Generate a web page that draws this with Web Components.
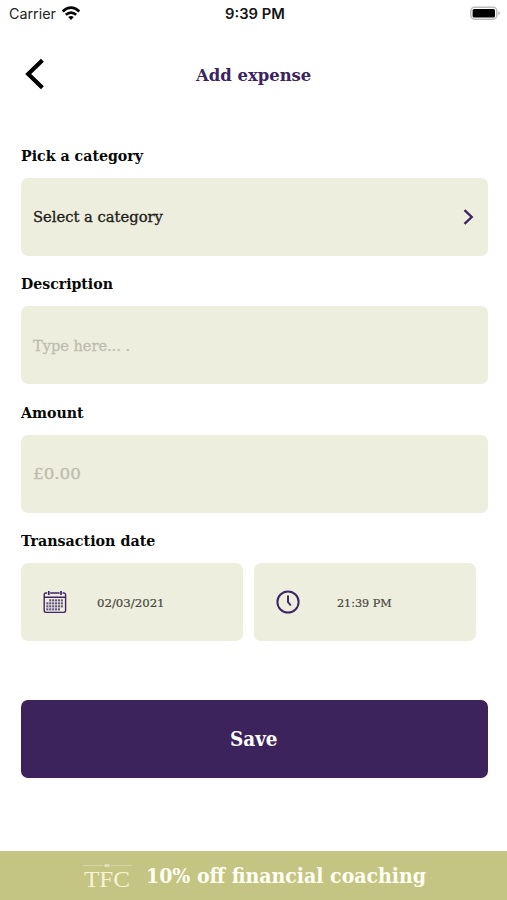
<!DOCTYPE html>
<html lang="en">
<head>
<meta charset="utf-8">
<title>Add expense</title>
<style>
html,body{margin:0;background:#fff}
body{width:507px;height:900px;overflow:hidden}
</style>
</head>
<body>
<expense-page></expense-page>
<script>
// One line of text, drawn at the width given by its attribute.
class FitText extends HTMLElement {
  connectedCallback() {
    const root = this.attachShadow({mode: 'open'});
    root.innerHTML = `<style>
      :host{display:block;flex:none;white-space:pre;width:${this.getAttribute('width')}px}
      span{display:inline-block;transform-origin:0 50%}
    </style><span></span>`;
    const span = root.querySelector('span');
    span.textContent = this.getAttribute('text');
    const w = span.offsetWidth;
    if (w) span.style.transform = `scaleX(${this.getAttribute('width') / w})`;
  }
}

class StatusBar extends HTMLElement {
  connectedCallback() {
    this.attachShadow({mode: 'open'}).innerHTML = `<style>
      :host{display:grid;grid-template-columns:1fr auto 1fr;align-items:center;height:28px;padding:0 6px 0 9px;font-family:Inter,sans-serif;color:#222;box-sizing:border-box}
      .l{display:flex;align-items:center;gap:5px}
      .carrier{font-size:14px;line-height:28px}
      .time{font-size:14px;font-weight:600;color:#151515;line-height:28px;margin-left:-1px}
      .r{justify-self:end;display:flex;margin-top:-2px}
      .l svg{margin-top:-2px}
      svg{display:block}
    </style>
    <div class="l"><fit-text class="carrier" width="47" text="Carrier"></fit-text>
      <svg width="20" height="15" viewBox="0 0 20 15" fill="none" stroke="#050505" stroke-width="2.7"><path d="M1.7 5.4Q10 -2 18.3 5.4"/><path d="M4.8 8.8Q10 4.3 15.2 8.8"/><path d="M7.2 11.1Q10 8.8 12.8 11.1L10 14Z" fill="#050505" stroke="none"/></svg></div>
    <fit-text class="time" width="60" text="9:39 PM"></fit-text>
    <div class="r"><svg width="32" height="16" viewBox="0 0 32 16"><rect x="1.8" y="2.2" width="26" height="12" rx="3.8" fill="#fff" stroke="#bcbcbc" stroke-width="1.5"/><rect x="3.6" y="4" width="22.4" height="8.5" rx="1.5"/><path d="M29.4 6.2q2.8 2 0 4z" fill="#aaa"/></svg></div>`;
  }
}

class PageHeader extends HTMLElement {
  connectedCallback() {
    this.attachShadow({mode: 'open'}).innerHTML = `<style>
      :host{display:grid;grid-template-columns:1fr auto 1fr;align-items:center;height:92px;padding:0 24px;box-sizing:border-box}
      fit-text{font:bold 17px/24px "DejaVu Serif Condensed","DejaVu Serif",serif;color:#3b2360;padding-top:1px}
      svg{display:block}
    </style>
    <svg width="22" height="34" viewBox="0 0 22 34" fill="none" stroke="#000" stroke-width="4.2"><path d="M18.4 3.2L4.2 17L18.4 30.8"/></svg>
    <fit-text width="115" text="Add expense"></fit-text><span></span>`;
  }
}

class FormField extends HTMLElement {
  connectedCallback() {
    this.attachShadow({mode: 'open'}).innerHTML = `<style>
      :host{display:block;height:128.67px}
      fit-text{font:bold 15.5px/24px "DejaVu Serif Condensed","DejaVu Serif",serif;color:#080808}
      .row{display:flex;gap:11px;margin-top:10px}
    </style>
    <fit-text width="${this.getAttribute('label-width')}" text="${this.getAttribute('label')}"></fit-text>
    <div class="row"><slot></slot></div>`;
  }
}

class FieldBox extends HTMLElement {
  connectedCallback() {
    this.attachShadow({mode: 'open'}).innerHTML = `<style>
      :host{display:flex;align-items:center;justify-content:space-between;box-sizing:border-box;width:467px;height:78px;padding:0 13px 0 12px;border-radius:7px;background:#edeedd;font:15.5px/24px "DejaVu Serif Condensed","DejaVu Serif",serif;color:#20201b;-webkit-text-stroke:.3px currentColor}
      :host([hint]){color:#bdbdaf}
      :host([small]){width:222px;justify-content:flex-start;padding:0 22px;font-size:11.5px;color:#484840;-webkit-text-stroke-width:.2px}
      ::slotted(fit-text){padding-top:1px}
    </style><slot></slot>`;
  }
}

class UiIcon extends HTMLElement {
  connectedCallback() {
    const dots = [];
    for (let y = 0; y < 4; y++) for (let x = 0; x < 6; x++) {
      if ((y === 0 && x === 0) || (y === 3 && x > 4)) continue;
      dots.push(`<rect x="${3.3 + x * 2.9}" y="${9.3 + y * 3}" width="2.1" height="2.1"/>`);
    }
    const art = {
      chevron: ['12', '18', '<path d="M1.5 2.2L8.7 9L1.5 15.8" stroke-width="2.4"/>'],
      calendar: ['24', '24', `<path d="M4.2 3H2.8Q1.2 3 1.2 4.8V20.6Q1.2 22.4 3 22.4H20.8Q22.6 22.4 22.6 20.6V4.8Q22.6 3 21 3H19.6M7.2 3H16.6M1.2 7.2H22.6" stroke-width="1.4"/><path d="M5.8 1V5M18 1V5" stroke-width="1.7"/><g fill="#655484" stroke="none">${dots.join('')}</g>`],
      clock: ['24', '24', '<circle cx="12" cy="12" r="10.6" stroke-width="2"/><path d="M12 5.4V12L14.8 15.5" stroke-width="2"/>']
    }[this.getAttribute('name')];
    this.attachShadow({mode: 'open'}).innerHTML = `<style>:host{display:block;flex:none}svg{display:block}</style>
    <svg width="${art[0]}" height="${art[1]}" viewBox="0 0 ${art[0]} ${art[1]}" fill="none" stroke="#3d2666">${art[2]}</svg>`;
  }
}

class SaveButton extends HTMLElement {
  connectedCallback() {
    this.attachShadow({mode: 'open'}).innerHTML = `<style>
      :host{display:flex;align-items:center;justify-content:center;width:467px;height:78px;border-radius:7px;background:#3c235b;color:#fff;font:bold 20px/28px "DejaVu Serif Condensed","DejaVu Serif",serif}
    </style><fit-text width="48" text="Save"></fit-text>`;
  }
}

class PromoBanner extends HTMLElement {
  connectedCallback() {
    this.attachShadow({mode: 'open'}).innerHTML = `<style>
      :host{display:flex;align-items:center;box-sizing:border-box;height:49px;padding:1px 0 0 83px;background:#c4c483;color:#fffff4}
      .logo{width:49px;margin-right:13.5px;display:flex;flex-direction:column}
      .logo fit-text{font:24px/22px "Liberation Serif",serif;color:#f5f3d3;margin-left:1px}
      .promo{font:bold 20px/28px "DejaVu Serif Condensed","DejaVu Serif",serif}
      svg{display:block}
    </style>
    <div class="logo"><svg width="49" height="5" viewBox="0 0 49 5"><path d="M0 2.5H20M28 2.5H49" stroke="#d6d5a5"/><path d="M21.5 1h5v3h-5z" fill="#e0dfb8"/></svg>
    <fit-text width="46" text="TFC"></fit-text></div>
    <fit-text class="promo" width="280" text="10% off financial coaching"></fit-text>`;
  }
}

class ExpensePage extends HTMLElement {
  connectedCallback() {
    this.attachShadow({mode: 'open'}).innerHTML = `<style>
      :host{display:flex;flex-direction:column;width:507px;height:900px;background:#fff}
      main{flex:1;padding:23.5px 0 0 20.6px}
      save-button{margin-top:42px}
      .date{margin-left:30px}
      .time{margin-left:37px}
    </style>
    <status-bar></status-bar>
    <page-header></page-header>
    <main>
      <form-field label="Pick a category" label-width="122"><field-box><fit-text width="130" text="Select a category"></fit-text><ui-icon name="chevron"></ui-icon></field-box></form-field>
      <form-field label="Description" label-width="92"><field-box hint><fit-text width="97" text="Type here... ."></fit-text></field-box></form-field>
      <form-field label="Amount" label-width="63"><field-box hint><fit-text width="48" text="£0.00"></fit-text></field-box></form-field>
      <form-field label="Transaction date" label-width="134"><field-box small><ui-icon name="calendar"></ui-icon><fit-text class="date" width="68" text="02/03/2021"></fit-text></field-box><field-box small><ui-icon name="clock"></ui-icon><fit-text class="time" width="55" text="21:39 PM"></fit-text></field-box></form-field>
      <save-button></save-button>
    </main>
    <promo-banner></promo-banner>`;
  }
}

customElements.define('fit-text', FitText);
customElements.define('ui-icon', UiIcon);
customElements.define('status-bar', StatusBar);
customElements.define('page-header', PageHeader);
customElements.define('field-box', FieldBox);
customElements.define('form-field', FormField);
customElements.define('save-button', SaveButton);
customElements.define('promo-banner', PromoBanner);
customElements.define('expense-page', ExpensePage);
</script>
</body>
</html>
